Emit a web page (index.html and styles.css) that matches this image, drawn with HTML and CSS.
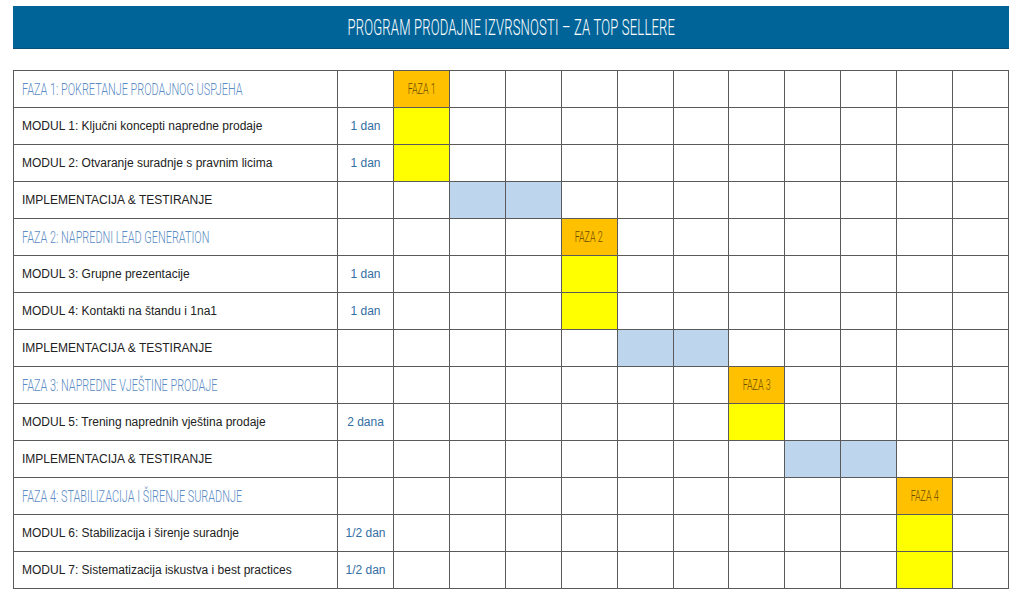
FILE: index.html
```html
<!DOCTYPE html>
<html lang="hr">
<head>
<meta charset="utf-8">
<title>Program prodajne izvrsnosti</title>
<link rel="stylesheet" href="styles.css">
</head>
<body>
<div class="page">
  <header class="banner"><h1 class="banner-title">PROGRAM PRODAJNE IZVRSNOSTI – ZA TOP SELLERE</h1></header>
  <table class="plan">
    <colgroup>
      <col class="c-label"><col class="c-dur">
      <col><col><col><col><col><col><col><col><col><col><col>
    </colgroup>
    <tbody>
      <tr class="phase"><td class="label"><span class="phase-text">FAZA 1: POKRETANJE PRODAJNOG USPJEHA</span></td><td></td><td class="orange"><span class="faza">FAZA 1</span></td><td></td><td></td><td></td><td></td><td></td><td></td><td></td><td></td><td></td><td></td></tr>
      <tr><td class="label">MODUL 1: Ključni koncepti napredne prodaje</td><td class="dur">1 dan</td><td class="yellow"></td><td></td><td></td><td></td><td></td><td></td><td></td><td></td><td></td><td></td><td></td></tr>
      <tr><td class="label">MODUL 2: Otvaranje suradnje s pravnim licima</td><td class="dur">1 dan</td><td class="yellow"></td><td></td><td></td><td></td><td></td><td></td><td></td><td></td><td></td><td></td><td></td></tr>
      <tr><td class="label">IMPLEMENTACIJA &amp; TESTIRANJE</td><td></td><td></td><td class="blue"></td><td class="blue"></td><td></td><td></td><td></td><td></td><td></td><td></td><td></td><td></td></tr>
      <tr class="phase"><td class="label"><span class="phase-text">FAZA 2: NAPREDNI LEAD GENERATION</span></td><td></td><td></td><td></td><td></td><td class="orange"><span class="faza">FAZA 2</span></td><td></td><td></td><td></td><td></td><td></td><td></td><td></td></tr>
      <tr><td class="label">MODUL 3: Grupne prezentacije</td><td class="dur">1 dan</td><td></td><td></td><td></td><td class="yellow"></td><td></td><td></td><td></td><td></td><td></td><td></td><td></td></tr>
      <tr><td class="label">MODUL 4: Kontakti na štandu i 1na1</td><td class="dur">1 dan</td><td></td><td></td><td></td><td class="yellow"></td><td></td><td></td><td></td><td></td><td></td><td></td><td></td></tr>
      <tr><td class="label">IMPLEMENTACIJA &amp; TESTIRANJE</td><td></td><td></td><td></td><td></td><td></td><td class="blue"></td><td class="blue"></td><td></td><td></td><td></td><td></td><td></td></tr>
      <tr class="phase"><td class="label"><span class="phase-text">FAZA 3: NAPREDNE VJEŠTINE PRODAJE</span></td><td></td><td></td><td></td><td></td><td></td><td></td><td></td><td class="orange"><span class="faza">FAZA 3</span></td><td></td><td></td><td></td><td></td></tr>
      <tr><td class="label">MODUL 5: Trening naprednih vještina prodaje</td><td class="dur">2 dana</td><td></td><td></td><td></td><td></td><td></td><td></td><td class="yellow"></td><td></td><td></td><td></td><td></td></tr>
      <tr><td class="label">IMPLEMENTACIJA &amp; TESTIRANJE</td><td></td><td></td><td></td><td></td><td></td><td></td><td></td><td></td><td class="blue"></td><td class="blue"></td><td></td><td></td></tr>
      <tr class="phase"><td class="label"><span class="phase-text">FAZA 4: STABILIZACIJA I ŠIRENJE SURADNJE</span></td><td></td><td></td><td></td><td></td><td></td><td></td><td></td><td></td><td></td><td></td><td class="orange"><span class="faza">FAZA 4</span></td><td></td></tr>
      <tr><td class="label">MODUL 6: Stabilizacija i širenje suradnje</td><td class="dur">1/2 dan</td><td></td><td></td><td></td><td></td><td></td><td></td><td></td><td></td><td></td><td class="yellow"></td><td></td></tr>
      <tr><td class="label">MODUL 7: Sistematizacija iskustva i best practices</td><td class="dur">1/2 dan</td><td></td><td></td><td></td><td></td><td></td><td></td><td></td><td></td><td></td><td class="yellow"></td><td></td></tr>
    </tbody>
  </table>
</div>
</body>
</html>
```

FILE: styles.css
```css
html, body {
  margin: 0;
  padding: 0;
  background: #ffffff;
}

.page {
  padding: 6px 0 0 13px;
  width: 996px;
  font-family: "Liberation Sans", Arial, sans-serif;
}

.banner {
  height: 43px;
  background: #016499;
  border-bottom: 1px solid #0b4f78;
  box-sizing: border-box;
  display: flex;
  align-items: center;
  justify-content: center;
}

.banner-title {
  margin: 0;
  font-family: Roboto, "Liberation Sans", sans-serif;
  font-weight: 300;
  font-size: 22.5px;
  color: #ffffff;
  white-space: nowrap;
  transform: scaleX(0.58);
  transform-origin: center;
  letter-spacing: 0.3px;
}

.plan {
  margin-top: 21px;
  width: 996px;
  border-collapse: collapse;
  table-layout: fixed;
}

.c-label { width: 324px; }
.c-dur { width: 56px; }

.plan td {
  border: 1px solid #5a5a5a;
  height: 37px;
  padding: 0;
  box-sizing: border-box;
  font-size: 12px;
  color: #222222;
}

.plan td.label {
  padding-left: 8px;
  white-space: nowrap;
  overflow: hidden;
}

.phase-text {
  display: inline-block;
  font-family: Roboto, "Liberation Sans", sans-serif;
  font-weight: 300;
  font-size: 17px;
  color: #5b8cc4;
  transform: scaleX(0.64);
  transform-origin: left center;
  white-space: nowrap;
}

.plan td.dur {
  text-align: center;
  color: #336ea3;
}

.plan td.orange {
  background: #ffc000;
  text-align: center;
}

.faza {
  display: inline-block;
  font-family: Roboto, "Liberation Sans", sans-serif;
  font-weight: 300;
  font-size: 14.5px;
  color: #6b4a00;
  transform: scaleX(0.615);
  white-space: nowrap;
}

.plan td.yellow { background: #ffff00; }
.plan td.blue { background: #bdd6ee; }
```
